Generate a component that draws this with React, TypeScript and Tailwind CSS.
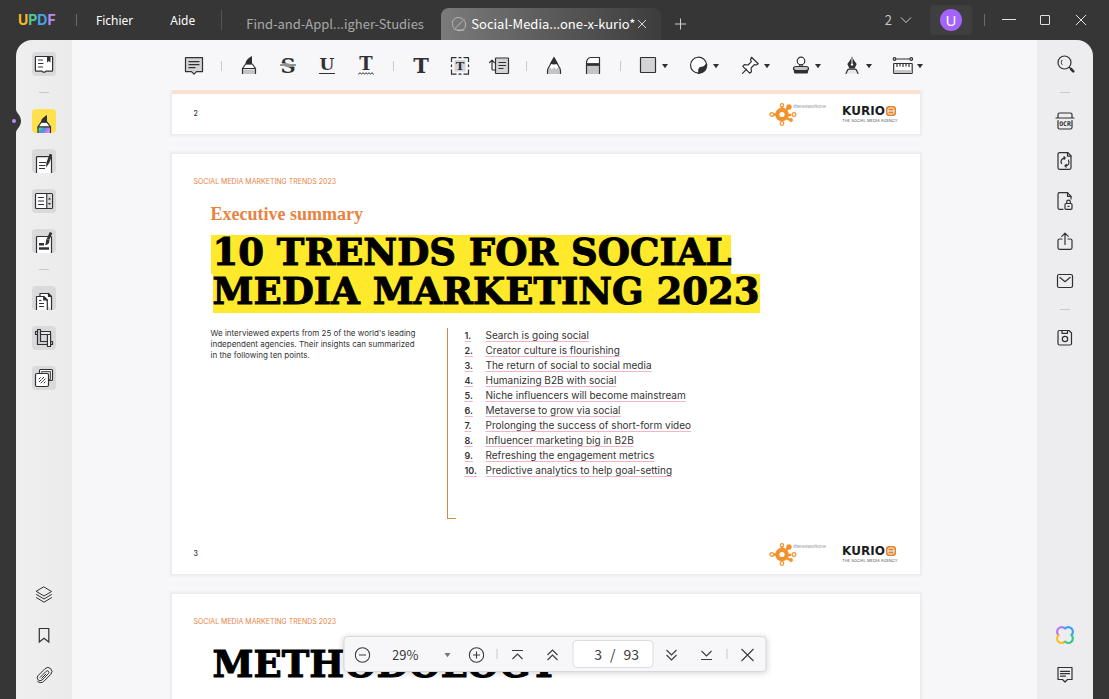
import React, { useState } from "react";

const INK = "#2f3033";

type IconProps = { children: React.ReactNode; size?: string };

function Icon({ children, size = "size-6" }: IconProps) {
  return (
    <svg
      viewBox="0 0 24 24"
      className={`${size} shrink-0 overflow-visible`}
      fill="none"
      stroke={INK}
      strokeWidth="1.2"
      strokeLinecap="round"
      strokeLinejoin="round"
      aria-hidden="true"
    >
      {children}
    </svg>
  );
}

/* ---------- left rail icons ---------- */

const ReaderIcon = (
  <Icon>
    <path fill="#fff" d="M4 4.5h16q.6 0 .6.6V18.6q0 .6-.6.6h-6l-1 1h-2l-1-1H4q-.6 0-.6-.6V5.1q0-.6.6-.6z" />
    <path d="M6.5 8h4M6.5 11.5h4.500M6.500 15h4" />
    <path fill={INK} stroke="none" d="M15 4h3.500v6.500l-1.750-1.500L15 10.500z" />
  </Icon>
);

const MarkerIcon = (
  <Icon>
    <defs>
      <linearGradient id="rainbow" x1="0" y1="0" x2="1" y2="0.4">
        <stop offset="0" stopColor="#ff9a3d" />
        <stop offset="0.2" stopColor="#6dd36a" />
        <stop offset="0.45" stopColor="#2aa7e0" />
        <stop offset="0.7" stopColor="#8f7bf0" />
        <stop offset="1" stopColor="#d98cf5" />
      </linearGradient>
    </defs>
    <path fill="url(#rainbow)" stroke="none" d="M6 18h12.500v6H6z" />
    <path fill="#fff" d="M9.300 13.200h5.700l3.500 4.600H6z" />
    <path d="M6 17.800V24M18.500 17.800V24" strokeLinecap="butt" />
    <path fill={INK} stroke="none" d="M9 13.500c0-3 1.200-4.500 6-7.500v7.500z" />
  </Icon>
);

const EditIcon = (
  <Icon>
    <path fill="#fff" strokeLinecap="butt" d="M4.500 24V8.500q0-.8.8-.8h13.400q.8 0 .8.8V24" />
    <path d="M7.500 13.500h6M7.500 16.500h5.500M7.500 19.500h5" />
    <path strokeWidth="2.800" strokeLinecap="butt" d="M19 5.200l-3.300 9" />
    <path fill={INK} stroke="none" d="M14.300 13.500l2.600 1-2.700 4z" />
  </Icon>
);

const FormIcon = (
  <Icon>
    <rect x="3.500" y="4.500" width="17" height="15" rx="1" fill="#fff" />
    <path fill="#d9d9dc" stroke="none" d="M15.500 5h4.500v14h-4.500z" />
    <path d="M14.800 4.500v15M6.500 8.500h5M6.500 12h5M6.500 15.500h5" />
    <path fill={INK} stroke="none" d="M17.500 8.500l1.600 2h-3.200zM17.500 16l1.600-2h-3.200z" />
  </Icon>
);

const RedactIcon = (
  <Icon>
    <path fill="#fff" strokeLinecap="butt" d="M4.500 24V8.300q0-.8.8-.8h13.400q.8 0 .8.8V24" />
    <path strokeWidth="2.600" strokeLinecap="butt" d="M7 15.200h5M7 19.500h10" />
    <path strokeWidth="2.800" strokeLinecap="butt" d="M19 3.500l-3 7" />
    <path fill={INK} stroke="none" d="M14.300 10l3.200 1.300c0 3-1.500 4.700-4.500 4.700 1.200-1.500.8-3.500 1.300-6z" />
  </Icon>
);

const OrganizeIcon = (
  <Icon>
    <path fill="#fff" strokeLinecap="butt" d="M8 10V7.500h8l3.500 3.500v13" />
    <path fill={INK} d="M16.500 7.500v3h3z" />
    <path fill="#fff" strokeLinecap="butt" d="M4.500 24V10.500h6.800l4 4V24" />
    <path fill={INK} d="M11.800 10.500v3.500h3.500z" />
    <path d="M7.500 14.500h1.500M7.500 17.500h4M7.500 20.500h4" />
  </Icon>
);

const CropIcon = (
  <Icon>
    <path fill="#e9e9eb" d="M3.500 5.500h15v14h-3v-11h-12z" />
    <path fill="#d0d0d3" d="M5.500 3.500h3v12h12v3H5.500z" />
    <path fill="#fff" d="M15.500 8.500h3v12h-3z" />
  </Icon>
);

const BatchIcon = (
  <Icon>
    <path fill="#fff" d="M8.500 3.500h11q1 0 1 1v9q0 1-1 1h-11q-1 0-1-1v-9q0-1 1-1z" />
    <path fill="#cfcfd2" d="M10 5.500h8.500v8H10z" strokeWidth="0.800" />
    <rect x="3.500" y="7.500" width="13" height="13" rx="1.500" fill="#fff" />
    <path strokeWidth="1" d="M7 13l1.300-1.300M7.200 15.800l2-2M10.200 12.800l1.500-1.500M9 17l1.500-1.500M11.500 14.500l1.700-1.700M12 17l1.200-1.200" />
  </Icon>
);

const LayersIcon = (
  <Icon>
    <path strokeWidth="1" d="M12 4l7.500 4.500L12 13 4.500 8.500z" />
    <path strokeWidth="1" d="M4.500 11.500L12 16l7.500-4.500M4.500 14.700L12 19.200l7.500-4.500" />
  </Icon>
);

const BookmarkIcon = (
  <Icon>
    <path strokeLinejoin="miter" d="M7.300 5.500h9.500v13.500l-4.750-3.700-4.750 3.700z" />
  </Icon>
);

const ClipIcon = (
  <Icon>
    <path strokeWidth="1" d="M8 14.500l6.200-6.200a1.600 1.600 0 0 1 2.300 2.300L10 17.100a3 3 0 0 1-4.200-4.200L13 5.700a4 4 0 0 1 5.700 5.700l-6.800 6.900a4.500 4.500 0 0 1-6.300.2" />
    <path strokeWidth="1" d="M9.800 15.200l4-4" />
  </Icon>
);

/* ---------- right rail icons ---------- */

const SearchIcon = (
  <Icon>
    <circle cx="11.500" cy="10.500" r="6.500" />
    <path d="M9 8.300c-1 1.300-1 3 0 4.200" strokeWidth="1" />
    <path d="M16.300 15.300l1.700 1.700" />
    <path d="M18 17l2.300 2.300" strokeWidth="2.600" />
  </Icon>
);

const OcrIcon = (
  <Icon>
    <path d="M5 8.500V5.500q0-1.500 1.500-1.500h11q1.500 0 1.500 1.500v3M3 9h18M5 11.500v7q0 1.500 1.500 1.500h11q1.500 0 1.500-1.500v-7" />
    <text x="12" y="17.300" textAnchor="middle" fontSize="6.500" fontWeight="700" fontFamily="'DejaVu Sans Mono', monospace" fill={INK} stroke="none">
      OCR
    </text>
  </Icon>
);

const ConvertIcon = (
  <Icon>
    <path d="M15 3.700H6.500q-1.500 0-1.500 1.500v13.600q0 1.500 1.500 1.500h10q1.500 0 1.500-1.500V7z" />
    <path d="M14.500 3.700v3.500H18" />
    <path d="M8.600 14.500a3.700 3.700 0 0 1 3-5.600M15.400 11.200a3.700 3.700 0 0 1-3 5.700M11 7.700l1.300 1.200L11 10.300M13.200 15.500l-1.300 1.300 1.300 1.400" />
  </Icon>
);

const ProtectIcon = (
  <Icon>
    <path d="M18 10V7.300l-3.500-3.600h-8q-1.500 0-1.500 1.500v13.600q0 1.500 1.500 1.500H10" />
    <path d="M14.500 3.700v3.600H18" />
    <rect x="12" y="14.500" width="7" height="5.800" rx="1" />
    <path d="M13.700 14.300v-1.300a1.800 1.800 0 0 1 3.600 0v1.300M15 17.400h1" />
  </Icon>
);

const ShareIcon = (
  <Icon>
    <path d="M9 10H6.500Q5 10 5 11.500v7.300q0 1.500 1.500 1.500h11q1.500 0 1.500-1.500v-7.300Q19 10 17.500 10H15M12 15.500V4.500M8.800 7.300L12 4.100l3.200 3.200" />
  </Icon>
);

const MailIcon = (
  <Icon>
    <rect x="4.500" y="5.500" width="15" height="13" rx="1.500" />
    <path d="M7 8.500l5 4.200 5-4.200" />
  </Icon>
);

const SaveIcon = (
  <Icon>
    <path d="M6.500 4.500h9.500l2.500 2.500v10.500q0 1.500-1.500 1.500H6.500Q5 19 5 17.500V6Q5 4.500 6.500 4.500z" />
    <path d="M9 4.500v2.800h5.500V4.500" />
    <circle cx="12" cy="13" r="2.700" />
  </Icon>
);

const AiIcon = (
  <Icon>
    <defs>
      <linearGradient id="clover-top" x1="0" x2="1">
        <stop offset="0.3" stopColor="#b57bf5" />
        <stop offset="0.6" stopColor="#3aa0f0" />
      </linearGradient>
      <linearGradient id="clover-bottom" x1="0" x2="1">
        <stop offset="0.3" stopColor="#fbc21a" />
        <stop offset="0.6" stopColor="#3ac58c" />
      </linearGradient>
    </defs>
    <path stroke="url(#clover-top)" strokeWidth="2.200" d="M5.400 12A4 4 0 1 1 12 5.600 4 4 0 1 1 18.600 12" />
    <path stroke="url(#clover-bottom)" strokeWidth="2.200" d="M5.400 12.300A4 4 0 1 0 12 18.600 4 4 0 1 0 18.600 12.300" />
  </Icon>
);

const NotesIcon = (
  <Icon>
    <path d="M5 4.500h14v12h-4.500L12 19l-2.500-2.500H5z" />
    <path d="M7.500 8.300h9M7.500 10.700h9M7.500 13.100h5" />
  </Icon>
);

/* ---------- toolbar icons ---------- */

const CommentIcon = (
  <Icon>
    <path fill="#d4d4d7" d="M3.500 3.700h17v14h-6L12 20.200l-2.500-2.500h-6z" />
    <path d="M7 7.700h10M7 10.700h10M7 13.700h6" />
  </Icon>
);

const HighlightIcon = (
  <Icon>
    <path fill="#c4c4c7" stroke="none" d="M5.500 15.500h13V20h-13z" />
    <path fill="#fff" d="M8.700 10h6.600l3.200 4.500h-13z" />
    <path d="M5.500 14.500V19.500M18.500 14.500v5" />
    <path fill={INK} stroke="none" d="M8.500 10.300c0-3.300 1.500-5.300 6.500-8.300v8.300z" />
  </Icon>
);

type GlyphProps = { letter: string; x?: number; y: number; size: number };

function Glyph({ letter, x = 12, y, size }: GlyphProps) {
  return (
    <text x={x} y={y} textAnchor="middle" fontSize={size} fontWeight="700" fontFamily="'DejaVu Serif', serif" fill={INK} stroke="none">
      {letter}
    </text>
  );
}

const StrikeIcon = (
  <Icon>
    <Glyph letter="S" y={18.500} size={21} />
    <path stroke="#f7f7f9" strokeWidth="3" strokeLinecap="butt" d="M4 11h16" />
    <path d="M4.500 11h15" />
  </Icon>
);

const UnderlineIcon = (
  <Icon>
    <Glyph letter="U" y={16} size={17} />
    <path d="M4.500 19.500h15" />
  </Icon>
);

const SquigglyIcon = (
  <Icon>
    <Glyph letter="T" y={16} size={18} />
    <path d="M4.500 20l1.500-1.200L7.500 20 9 18.800l1.500 1.200 1.500-1.200 1.500 1.200 1.500-1.200 1.500 1.200 1.500-1.200 1.500 1.200" strokeWidth="1" />
  </Icon>
);

const TextIcon = (
  <Icon>
    <Glyph letter="T" y={18.500} size={21} />
  </Icon>
);

const TextBoxIcon = (
  <Icon>
    <path fill="#d4d4d7" stroke="none" d="M6.500 6h11v11.500h-11z" />
    <Glyph letter="T" y={16} size={11.500} />
    <path strokeLinecap="butt" d="M3.500 8V3.700h5M10.500 3.700h3M15.500 3.700h5V8M20.500 10.500v2.500M20.500 15.500v4.700h-5M13.500 20.200h-3M8.500 20.200h-5v-4.700M3.500 13v-2.500" />
  </Icon>
);

const CalloutIcon = (
  <Icon>
    <rect x="8.500" y="4" width="13" height="15.500" rx="0.500" fill="#d4d4d7" />
    <path d="M12 8.500h6.500M12 11.500h6.500M12 14.500h4M8.500 16H6q-1 0-1-1V6.500M2.500 8.700L5 6.200l2.300 2.500" />
  </Icon>
);

const PencilIcon = (
  <Icon>
    <path fill="#fff" stroke="none" d="M12 4l-4.700 8.500q-1.500 2-1.500 4V17h12.400v-.500q0-2-1.500-4z" />
    <path fill="#c4c4c7" stroke="none" d="M6 15l2-1.800 2 2 2-2 2 2 2-2 2 1.800v5H6z" />
    <path d="M5.500 19.500v-3q0-2 1.800-4.200L12 4l4.700 8.300q1.800 2.200 1.800 4.200v3" />
    <path fill={INK} stroke="none" d="M12 2.500l4 7.200q-4 1.600-8 0z" />
  </Icon>
);

const EraserIcon = (
  <Icon>
    <path fill="#c4c4c7" stroke="none" d="M5.500 12h13v8h-13z" />
    <path fill="#fff" stroke="none" d="M5.500 9.500L8.500 4h10v6h-13z" />
    <path d="M5.500 19.500V8Q6.500 3.500 10 3.500h8.500v16" />
    <path strokeWidth="2.800" strokeLinecap="butt" d="M5.500 10.500h13" />
  </Icon>
);

const ShapeIcon = (
  <Icon>
    <rect x="4.500" y="3.500" width="15" height="15" rx="0.500" fill="#d4d4d7" />
  </Icon>
);

const StickerIcon = (
  <Icon>
    <path fill="#fff" d="M11.500 19.200a8 8 0 1 1 8-9z" />
    <path fill={INK} d="M11.500 19.400c.9-1.400-.6-3.900 1.200-5.500 1.500-1.300 4.700.5 7-3.700.2 5.500-3.200 8.700-8.200 9.200z" />
  </Icon>
);

const PinIcon = (
  <Icon>
    <path fill="#fff" d="M13.500 3.300l6.700 6.400-2 1.300-1.900-.3-3.200 3.300.3 3.800-1.700 1.400-6.900-6.900 1.500-1.700 3.800.4 3.300-3.300-.9-1.900z" />
    <path d="M8.600 15.200L4.500 19.300" />
  </Icon>
);

const StampIcon = (
  <Icon>
    <circle cx="12" cy="7" r="3.800" fill="#fff" />
    <path d="M10.800 10.700v2.500M13.200 10.700v2.500" />
    <path fill="#c4c4c7" d="M7 12.500h10q2.500 0 2.500 2t-2.500 2H7q-2.500 0-2.500-2t2.500-2z" />
    <path fill={INK} d="M5.500 16.500h13v1.500q0 1-1 1h-11q-1 0-1-1z" />
  </Icon>
);

const SignIcon = (
  <Icon>
    <path fill={INK} stroke="none" d="M12 2.500q1 3 4.700 7.500l-2.200 4.500H9.500L7.300 10q3.700-4.500 4.700-7.500z" />
    <path stroke="#f7f7f9" strokeWidth="1" d="M12 4v5" />
    <circle cx="12" cy="10.500" r="1.200" fill="#f7f7f9" stroke="none" />
    <path fill="#e6e6e8" stroke="none" d="M9 15.200h6.500l2.500 4.300H6z" />
    <path d="M6 19.500l1.700-3.700q.4-.6 1.300-.6h6q.9 0 1.300.6l1.700 3.700" />
  </Icon>
);

const MeasureIcon = (
  <Icon>
    <path d="M4.500 5h15" />
    <circle cx="3.500" cy="5" r="1.300" fill="#fff" />
    <circle cx="20.300" cy="5" r="1.300" fill="#fff" />
    <rect x="2.700" y="9.500" width="18.500" height="10" rx="0.500" fill="#fff" />
    <path fill="#c4c4c7" stroke="none" d="M3.300 16h17.300v3H3.300z" />
    <path d="M6 9.500v3M9 9.500v2.500M12 9.500v3M15 9.500v2.500M18 9.500v3" />
  </Icon>
);

function Caret({ className = "text-[#2f3033]" }: { className?: string }) {
  return (
    <svg viewBox="0 0 12 6" className={`h-1.5 w-3 shrink-0 ${className}`} aria-hidden="true">
      <path fill="currentColor" d="M2 1h6L5 5.200z" />
    </svg>
  );
}

type Entry = { label: string; icon: React.ReactNode; menu?: boolean } | null;

const tools: Entry[] = [
  { label: "Comment", icon: CommentIcon },
  null,
  { label: "Highlight", icon: HighlightIcon },
  { label: "Strikethrough", icon: StrikeIcon },
  { label: "Underline", icon: UnderlineIcon },
  { label: "Squiggly underline", icon: SquigglyIcon },
  null,
  { label: "Text", icon: TextIcon },
  { label: "Text box", icon: TextBoxIcon },
  { label: "Callout", icon: CalloutIcon },
  null,
  { label: "Pencil", icon: PencilIcon },
  { label: "Eraser", icon: EraserIcon },
  null,
  { label: "Shapes", icon: ShapeIcon, menu: true },
  { label: "Stickers", icon: StickerIcon, menu: true },
  { label: "Attachments", icon: PinIcon, menu: true },
  { label: "Stamps", icon: StampIcon, menu: true },
  { label: "Signature", icon: SignIcon, menu: true },
  { label: "Measure", icon: MeasureIcon, menu: true },
];

const leftTools: Entry[] = [
  { label: "Reader", icon: ReaderIcon },
  null,
  { label: "Comment mode", icon: MarkerIcon },
  { label: "Edit PDF", icon: EditIcon },
  { label: "Prepare form", icon: FormIcon },
  { label: "Redact", icon: RedactIcon },
  null,
  { label: "Organize pages", icon: OrganizeIcon },
  { label: "Crop pages", icon: CropIcon },
  { label: "Batch", icon: BatchIcon },
];

const leftPanels = [
  { label: "Layers", icon: LayersIcon },
  { label: "Bookmarks", icon: BookmarkIcon },
  { label: "Attachments panel", icon: ClipIcon },
];

const rightTools: Entry[] = [
  { label: "Search", icon: SearchIcon },
  null,
  { label: "OCR", icon: OcrIcon },
  { label: "Convert", icon: ConvertIcon },
  { label: "Protect", icon: ProtectIcon },
  { label: "Share", icon: ShareIcon },
  { label: "Email", icon: MailIcon },
  null,
  { label: "Save", icon: SaveIcon },
];

const trends = [
  "Search is going social",
  "Creator culture is flourishing",
  "The return of social to social media",
  "Humanizing B2B with social",
  "Niche influencers will become mainstream",
  "Metaverse to grow via social",
  "Prolonging the success of short-form video",
  "Influencer marketing big in B2B",
  "Refreshing the engagement metrics",
  "Predictive analytics to help goal-setting",
];

function RailDivider() {
  return <div className="h-px w-2.5 bg-[#c9c9cc]" />;
}

function TitleBar() {
  return (
    <header className="flex h-10 shrink-0 items-center bg-[#363636] pl-[18px] text-white">
      <div className="w-[58px] font-['Inter',sans-serif] text-sm leading-5 font-bold">
        <span className="text-[#f9b824]">U</span>
        <span className="text-[#4fcb8d]">P</span>
        <span className="text-[#4aa3e8]">D</span>
        <span className="text-[#b98cf0]">F</span>
      </div>
      <div className="h-3 w-px bg-[#6b6b6b]" />
      <nav className="flex pt-0.5 text-xs">
        <button className="px-[19px]">Fichier</button>
        <button className="px-[18px]">Aide</button>
      </nav>
      <div className="ml-2 h-5 w-px bg-[#555]" />
      <div className="flex h-8 self-end font-['Noto_Sans_CJK_SC',sans-serif] text-[13px] leading-5">
        <button className="w-[219px] pl-6 text-left text-[#a9a9a9]">Find-and-Appl...igher-Studies</button>
        <div className="flex w-[220px] items-center rounded-t-lg bg-linear-to-r from-[#7b7b7b] via-[#5a5a5a] to-[#3d3d3d] pl-2.5">
          <svg viewBox="0 0 16 16" className="mr-1 size-4" fill="none" stroke="#b9b9b9" strokeLinecap="round" aria-hidden="true">
            <path d="M2.500 11.500a6.300 6.300 0 0 1 9-8.700M13.500 4.800a6.300 6.300 0 0 1-9.200 8.500M3 13.500L13.500 3M6.500 14h6.500" />
          </svg>
          <button className="w-[166px] text-left">Social-Media...one-x-kurio*</button>
          <button aria-label="Close tab">
            <svg viewBox="0 0 10 10" className="size-2.5" stroke="#d6d6d6" aria-hidden="true">
              <path d="M1 1l8 8M9 1L1 9" />
            </svg>
          </button>
        </div>
        <button aria-label="New tab" className="px-3.5">
          <svg viewBox="0 0 12 12" className="size-3" stroke="#d0d0d0" aria-hidden="true">
            <path d="M5.500 .5v11M0 6h11" />
          </svg>
        </button>
      </div>
      <div className="ml-auto flex items-center">
        <button className="flex items-center gap-2 font-['Noto_Sans_CJK_SC',sans-serif] text-[13px] leading-5 text-[#c9c9c9]" aria-label="Open tabs">
          <span>2</span>
          <svg viewBox="0 0 12 8" className="h-2 w-3" fill="none" stroke="#d0d0d0" aria-hidden="true">
            <path d="M1 1.500l5 5 5-5" />
          </svg>
        </button>
        <button className="ml-[18px] flex h-[30px] w-[42px] items-center justify-center rounded bg-[#3f3f3f]" aria-label="Account">
          <span className="flex size-[22px] items-center justify-center rounded-full bg-[#a463fb] text-[15px] leading-none">U</span>
        </button>
        <div className="ml-3 h-3 w-px bg-[#6b6b6b]" />
        <button aria-label="Minimize" className="ml-[17px]">
          <svg viewBox="0 0 14 14" className="size-3.5" stroke="#e2e2e2" aria-hidden="true">
            <path d="M0 6.500h14" />
          </svg>
        </button>
        <button aria-label="Maximize" className="ml-6">
          <svg viewBox="0 0 10 10" className="size-2.5" fill="none" stroke="#e2e2e2" aria-hidden="true">
            <rect x=".5" y=".5" width="9" height="9" rx=".5" />
          </svg>
        </button>
        <button aria-label="Close" className="mr-[23px] ml-[26px]">
          <svg viewBox="0 0 10 10" className="size-2.5" stroke="#e2e2e2" aria-hidden="true">
            <path d="M0 0l10 10M10 0L0 10" />
          </svg>
        </button>
      </div>
    </header>
  );
}

function LeftRail() {
  return (
    <aside className="flex w-14 shrink-0 flex-col items-center gap-4 rounded-tl-2xl bg-linear-to-r from-[#efeff0] to-[#ebebec] py-3">
      {leftTools.map((tool, i) =>
        tool === null ? (
          <RailDivider key={i} />
        ) : (
          <button
            key={tool.label}
            aria-label={tool.label}
            className={`relative rounded ${tool.label === "Comment mode" ? "bg-[#ffe04d]" : "bg-[#dadadb]"}`}
          >
            {tool.icon}
            {tool.label === "Comment mode" && (
              <svg viewBox="0 0 10 24" className="absolute top-0 -left-5 h-6 w-2.5" aria-hidden="true">
                <path fill="#363636" d="M4 0c0 4 5 6 5 12s-5 8-5 12z" />
                <circle cx="2" cy="12" r="2" fill="#b98cf5" />
              </svg>
            )}
          </button>
        )
      )}
      <div className="mt-auto flex flex-col gap-4">
        {leftPanels.map((panel) => (
          <button key={panel.label} aria-label={panel.label}>
            {panel.icon}
          </button>
        ))}
      </div>
    </aside>
  );
}

function RightRail() {
  return (
    <aside className="flex w-14 shrink-0 flex-col items-center gap-4 rounded-tr-2xl bg-[#ededef] py-3">
      {rightTools.map((tool, i) =>
        tool === null ? (
          <RailDivider key={i} />
        ) : (
          <button key={tool.label} aria-label={tool.label}>
            {tool.icon}
          </button>
        )
      )}
      <div className="mt-auto flex flex-col gap-4">
        <button aria-label="AI assistant">{AiIcon}</button>
        <button aria-label="Notes">{NotesIcon}</button>
      </div>
    </aside>
  );
}

function Toolbar() {
  return (
    <div className="flex h-[50px] shrink-0 items-center justify-center gap-[15px] pt-0.5">
      {tools.map((tool, i) =>
        tool === null ? (
          <div key={i} className="h-2.5 w-px bg-[#c9c9cc]" />
        ) : (
          <button key={tool.label} aria-label={tool.label} className="flex items-center">
            {tool.icon}
            {tool.menu && <Caret />}
          </button>
        )
      )}
    </div>
  );
}

function NetworkLogo() {
  return (
    <div className="flex">
      <svg viewBox="0 0 28 24" className="h-6 w-7" fill="#f2922e" aria-hidden="true">
        <circle cx="13" cy="12.500" r="6.800" />
        <path stroke="#f2922e" strokeWidth="2.600" d="M13 12V5M13 13v6M13 12.500H5M13 12l6-6M13 13h9M13 13l8 5" />
        <circle cx="13" cy="12.500" r="2.600" fill="#fff" />
        <circle cx="13" cy="3.300" r="1.600" fill="#fff" stroke="#f2922e" strokeWidth="1.200" />
        <circle cx="2.800" cy="12.500" r="1.900" fill="#fff" stroke="#f2922e" strokeWidth="1.200" />
        <circle cx="13" cy="21.500" r="1.800" fill="#fff" stroke="#f2922e" strokeWidth="1.200" />
        <circle cx="25" cy="12.500" r="1.900" fill="#fff" stroke="#f2922e" strokeWidth="1.200" />
        <circle cx="20" cy="5" r="2.700" />
        <circle cx="22" cy="18" r="1.900" />
      </svg>
      <span className="-ml-1 pt-0.5 font-['Liberation_Sans',sans-serif] text-[5px] leading-[5px] text-[#9a9a9a]">
        <span className="text-[#7c93b8]">the</span>networkone
      </span>
    </div>
  );
}

function KurioLogo() {
  return (
    <div className="flex flex-col justify-center text-[#1d1d1f]">
      <div className="flex items-center gap-px font-['DejaVu_Sans',sans-serif] text-[12px] leading-[11px] font-bold">
        KURIO
        <svg viewBox="0 0 10 10" className="size-2.5" aria-hidden="true">
          <rect width="10" height="10" rx="3" fill="#e5812a" />
          <rect x="2" y="2" width="6" height="6" rx="1.500" fill="none" stroke="#fff" />
          <path d="M2 5h6" stroke="#fff" />
        </svg>
      </div>
      <div className="pt-px font-['Inter',sans-serif] text-[4px] leading-[5px] text-[#555]">THE SOCIAL MEDIA AGENCY</div>
    </div>
  );
}

function PageFooter({ number }: { number: number }) {
  return (
    <footer className="mt-auto flex items-center pr-[22px] pb-2 pl-[22px]">
      <span className="font-['Inter',sans-serif] text-[7px] leading-3 font-medium text-[#333]">{number}</span>
      <div className="ml-auto flex items-center gap-4">
        <NetworkLogo />
        <KurioLogo />
      </div>
    </footer>
  );
}

function Eyebrow() {
  return (
    <p className="px-[22px] pt-[22px] font-['Inter',sans-serif] text-[7px] leading-[11px] text-[#e8833f]">
      SOCIAL MEDIA MARKETING TRENDS 2023
    </p>
  );
}

const pageClass = "flex w-full max-w-[748px] shrink-0 flex-col bg-white text-[#333] shadow-[0_0_2px_2px_#ebebed]";
const titleClass =
  "font-['DejaVu_Serif',serif] text-[37px] leading-[35px] font-bold text-black [-webkit-text-stroke:1px_#000]";

function Pages() {
  return (
    <div className="flex min-h-0 flex-1 flex-col items-center gap-5 overflow-hidden pr-[18px]">
      <section className={`${pageClass} h-11 border-t-4 border-[#fbe0d2]`}>
        <PageFooter number={2} />
      </section>

      <section className={`${pageClass} min-h-[420px]`}>
        <Eyebrow />
        <div className="px-[39px] pt-[17px]">
          <h2 className="font-['Liberation_Serif',serif] text-[18px] leading-5 font-bold text-[#e8833f]">Executive summary</h2>
          <h1 className={`${titleClass} mt-[11px]`}>
            <span className="block w-fit bg-[#ffe92b] pb-1 pl-0.5">10 TRENDS FOR SOCIAL</span>
            <span className="ml-0.5 block w-fit bg-[#ffe92b] pb-1">MEDIA MARKETING 2023</span>
          </h1>
          <div className="mt-[15px] flex font-['Inter',sans-serif]">
            <p className="w-[236px] pr-6 text-[8px] leading-[11px]">
              We interviewed experts from 25 of the world&apos;s leading independent agencies. Their insights can summarized in the following
              ten points.
            </p>
            <div className="flex flex-col border-l border-[#d98546]">
              <ol className="pl-[17px] text-[10px] leading-[15px]">
                {trends.map((trend, i) => (
                  <li key={trend} className="flex">
                    <span className="w-[21px] text-[9px] font-semibold underline decoration-[#f5b3c8] decoration-1 underline-offset-2">
                      {i + 1}.
                    </span>
                    <span className="underline decoration-[#f5b3c8] decoration-1 underline-offset-2 [text-decoration-skip-ink:none]">
                      {trend}
                    </span>
                  </li>
                ))}
              </ol>
              <div className="h-[41px] w-2 border-b border-[#d98546]" />
            </div>
          </div>
        </div>
        <PageFooter number={3} />
      </section>

      <section className={`${pageClass} min-h-[420px]`}>
        <Eyebrow />
        <h1 className={`${titleClass} px-[41px] pt-5`}>METHODOLOGY</h1>
      </section>
    </div>
  );
}

function BarIcon({ d }: { d: string }) {
  return (
    <svg viewBox="0 0 16 16" className="size-4" fill="none" stroke="#3a3a3c" strokeWidth="1.100" aria-hidden="true">
      <path d={d} />
    </svg>
  );
}

function PageBar() {
  const [page, setPage] = useState("3");
  const [zoom, setZoom] = useState("29%");
  return (
    <div className="absolute bottom-[27px] left-1/2 flex h-9 -translate-x-1/2 items-center rounded border border-[#d9d9db] bg-[#f7f6f8] px-2.5 font-['Noto_Sans_CJK_SC',sans-serif] leading-5 shadow-[0_1px_6px_rgba(0,0,0,0.18)]">
      <button aria-label="Zoom out" className="pt-0.5">
        <BarIcon d="M8 .8a7.200 7.200 0 1 0 0 14.400A7.200 7.200 0 1 0 8 .8M4.500 8h7" />
      </button>
      <label className="ml-[22px] flex w-[62px] items-center pt-0.5 text-[13px] text-[#3a3a3c]">
        <span className="sr-only">Zoom level</span>
        <select className="w-[50px] appearance-none bg-transparent outline-none" value={zoom} onChange={(e) => setZoom(e.target.value)}>
          <option>29%</option>
          <option>50%</option>
          <option>100%</option>
        </select>
        <Caret className="text-[#77777a]" />
      </label>
      <button aria-label="Zoom in" className="ml-3.5 pt-0.5">
        <BarIcon d="M8 .8a7.200 7.200 0 1 0 0 14.400A7.200 7.200 0 1 0 8 .8M4.500 8h7M8 4.500v7" />
      </button>
      <div className="mx-3 h-2.5 w-px bg-[#c9c9cc]" />
      <button aria-label="First page" className="pt-0.5">
        <BarIcon d="M2.500 3.500h11M3 12l5-5 5 5" />
      </button>
      <button aria-label="Previous page" className="ml-[19px] pt-0.5">
        <BarIcon d="M3 8l5-5 5 5M3 13l5-5 5 5" />
      </button>
      <div className="ml-3 flex h-7 w-[81px] items-center rounded border border-[#dcdcde] bg-white text-sm text-[#3a3a3c]">
        <input
          aria-label="Page number"
          className="w-[29px] bg-transparent text-right outline-none"
          value={page}
          onChange={(e) => setPage(e.target.value)}
        />
        <span className="pl-2">/</span>
        <span className="pl-2">93</span>
      </div>
      <button aria-label="Next page" className="ml-2.5 pt-0.5">
        <BarIcon d="M3 3l5 5 5-5M3 8l5 5 5-5" />
      </button>
      <button aria-label="Last page" className="ml-[19px] pt-0.5">
        <BarIcon d="M2.500 12.500h11M3 4l5 5 5-5" />
      </button>
      <div className="mx-3 h-2.5 w-px bg-[#c9c9cc]" />
      <button aria-label="Close page bar" className="pt-0.5">
        <BarIcon d="M2 2l12 12M14 2L2 14" />
      </button>
    </div>
  );
}

export default function App() {
  return (
    <div className="flex h-screen flex-col bg-[#363636] font-['Noto_Sans',sans-serif]">
      <TitleBar />
      <div className="flex min-h-0 flex-1 px-4">
        <LeftRail />
        <main className="relative flex min-w-0 flex-1 flex-col bg-[#f7f7f9]">
          <Toolbar />
          <Pages />
          <PageBar />
        </main>
        <RightRail />
      </div>
    </div>
  );
}
